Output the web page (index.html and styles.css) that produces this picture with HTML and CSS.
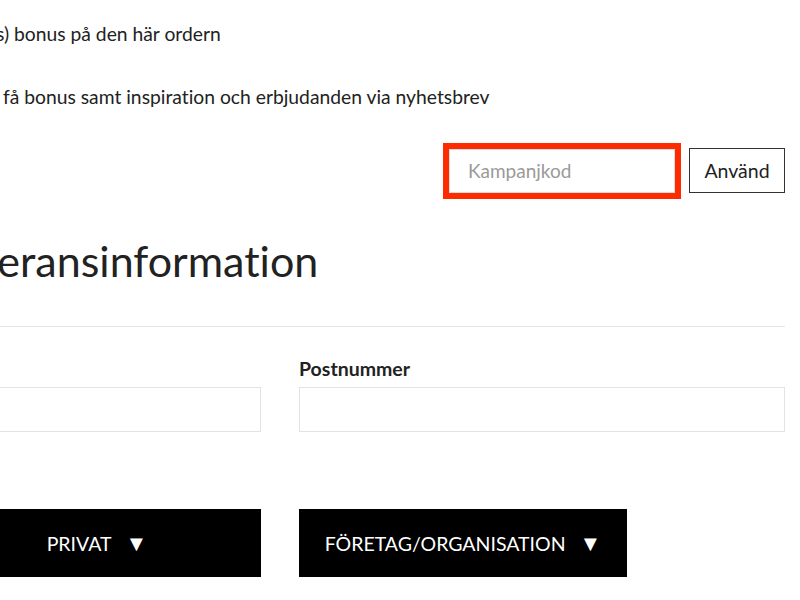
FILE: index.html
```html
<!DOCTYPE html>
<html>

<head>
    <meta charset="UTF-8">
    <title>Kassa</title>
    <link rel="stylesheet" href="styles.css">
</head>

<body>

    <div id="checkout">
        <p class="bonus">s) bonus på den här ordern</p>
        <p class="newsletter">få bonus samt inspiration och erbjudanden via nyhetsbrev</p>

        <div class="campaign">
            <input type="text" class="campaign_input" placeholder="Kampanjkod">
            <div class="campaign_btn">Använd</div>
        </div>

        <h2 class="title">Leveransinformation</h2>
        <div class="line"></div>

        <div class="fields">
            <div class="field">
                <label>&nbsp;</label>
                <input type="text" class="field_input">
            </div>
            <div class="field">
                <label>Postnummer</label>
                <input type="text" class="field_input">
            </div>
        </div>

        <div class="customer">
            <div class="customer_btn">PRIVAT<span class="arrow">&#9660;</span></div>
            <div class="customer_btn">FÖRETAG/ORGANISATION<span class="arrow">&#9660;</span></div>
        </div>
    </div>

</body>

</html>
```

FILE: styles.css
```css
body {
    margin: 0;
    overflow: hidden;
    background: #fff;
    color: #222;
    font-family: Lato, "Open Sans", sans-serif;
    font-variant-ligatures: none;
}

#checkout {
    width: 785px;
}

.bonus {
    margin: 0 0 0 -4px;
    padding-top: 22px;
    font-size: 19.3px;
    line-height: 24px;
}

.newsletter {
    margin: 39px 0 0 3px;
    font-size: 19.3px;
    line-height: 24px;
}

/* kampanjkod */

.campaign {
    margin-top: 39px;
    height: 45px;
    display: flex;
    justify-content: flex-end;
    align-items: center;
    gap: 14px;
}

.campaign_input {
    box-sizing: border-box;
    width: 226px;
    height: 44px;
    padding: 0 18px;
    border: 1px solid #ddd;
    outline: 6px solid #fe2a00;
    font-family: Lato, sans-serif;
    font-size: 19px;
    color: #222;
}

.campaign_input::placeholder {
    color: #9a9a9a;
}

.campaign_btn {
    box-sizing: border-box;
    width: 96px;
    height: 45px;
    line-height: 43px;
    border: 1px solid #333;
    text-align: center;
    font-size: 19.5px;
}

.title {
    margin: 43px 0 0 -67px;
    font-size: 43px;
    font-weight: normal;
    line-height: 50px;
}

.line {
    margin-top: 40px;
    height: 1px;
    background: #e6e6e6;
}

/* formulär */

.fields {
    margin: 30px 0 0 -225px;
    display: grid;
    grid-template-columns: 486px 486px;
    gap: 38px;
}

.field label {
    display: block;
    font-size: 19.5px;
    font-weight: bold;
    line-height: 24px;
    margin-bottom: 6px;
}

.field_input {
    display: block;
    box-sizing: border-box;
    width: 100%;
    height: 45px;
    border: 1px solid #e3e3e3;
}

.customer {
    margin: 77px 0 0 -67px;
    display: flex;
    gap: 38px;
}

.customer_btn {
    width: 328px;
    height: 68px;
    line-height: 68px;
    background: #000;
    color: #fff;
    text-align: center;
    font-size: 19.5px;
}

.customer_btn .arrow {
    margin-left: 14px;
    font-size: 22px;
}
```
